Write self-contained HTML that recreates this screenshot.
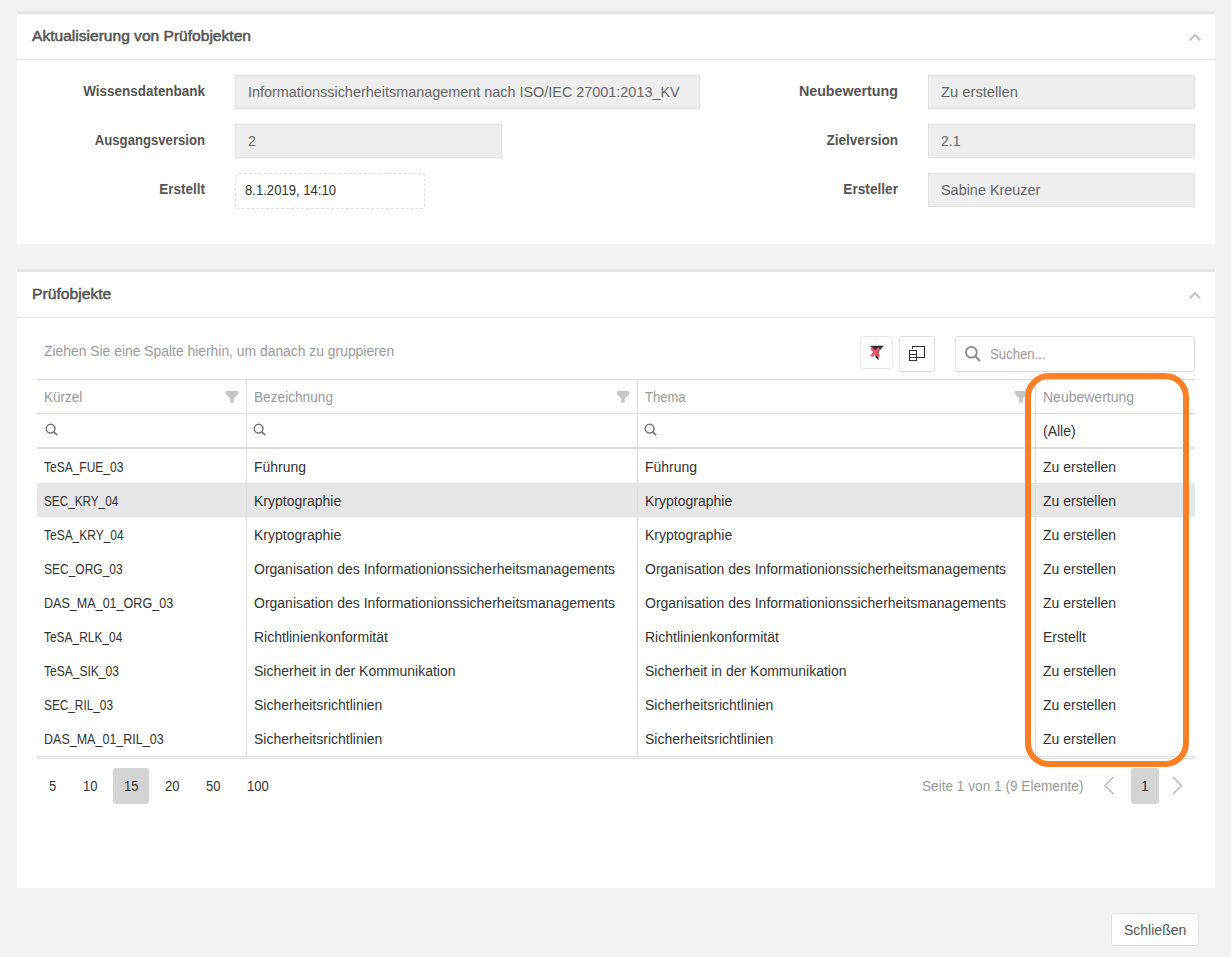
<!DOCTYPE html>
<html><head><meta charset="utf-8">
<style>
*{box-sizing:border-box;margin:0;padding:0}
html,body{width:1231px;height:957px;overflow:hidden;background:#f2f2f2;font-family:"Liberation Sans",sans-serif;font-size:14px;color:#333}
.a{position:absolute;white-space:nowrap}
.t{position:absolute;white-space:nowrap;line-height:20px;font-size:14px}
.panel{position:absolute;background:#fff;border-top:3px solid #e4e7ea}
.hline{position:absolute;height:1px;background:#e4e7ea}
.title{color:#555;-webkit-text-stroke:0.5px #555}
.lbl{color:#555;font-weight:bold;text-align:right}
.fld{position:absolute;background:#eeeeee;border:1px solid #e0e2e5}
.ftx{color:#666}
.gl{position:absolute;background:#dddddd}
.hd{color:#999}
.cell{color:#333}
</style></head><body>

<div class="panel" style="left:17px;top:11px;width:1198px;height:233px"></div>
<div class="hline" style="left:17px;top:59px;width:1198px"></div>
<div class="t title" style="left:32px;top:26px;transform:scaleX(1.112);transform-origin:left center;">Aktualisierung von Prüfobjekten</div>
<svg class="a" style="left:1187px;top:31px" width="16" height="12" viewBox="0 0 16 12"><path d="M2.8 9.2 L8 4 L13.2 9.2" fill="none" stroke="#c2c2c2" stroke-width="2"/></svg>
<div class="t lbl" style="left:0;width:205px;top:81px;transform:scaleX(0.961);transform-origin:right center;">Wissensdatenbank</div>
<div class="fld" style="left:235px;top:75px;width:465px;height:34px"></div>
<div class="t ftx" style="left:248px;top:82px;transform:scaleX(1.029);transform-origin:left center;">Informationssicherheitsmanagement nach ISO/IEC 27001:2013_KV</div>
<div class="t lbl" style="left:0;width:205px;top:130px;transform:scaleX(0.938);transform-origin:right center;">Ausgangsversion</div>
<div class="fld" style="left:235px;top:124px;width:267px;height:34px"></div>
<div class="t ftx" style="left:248px;top:131px">2</div>
<div class="t lbl" style="left:0;width:205px;top:179px;transform:scaleX(0.964);transform-origin:right center;">Erstellt</div>
<div class="a" style="left:235px;top:173px;width:190px;height:36px;border:1px dashed #ddd;border-radius:4px"></div>
<div class="t" style="left:245px;top:180px;color:#333;transform:scaleX(0.936);transform-origin:left center;">8.1.2019, 14:10</div>
<div class="t lbl" style="left:700px;width:198px;top:81px;transform:scaleX(1.019);transform-origin:right center;">Neubewertung</div>
<div class="fld" style="left:928px;top:75px;width:267px;height:34px"></div>
<div class="t ftx" style="left:941px;top:82px;transform:scaleX(1.053);transform-origin:left center;">Zu erstellen</div>
<div class="t lbl" style="left:700px;width:198px;top:130px;transform:scaleX(0.967);transform-origin:right center;">Zielversion</div>
<div class="fld" style="left:928px;top:124px;width:267px;height:34px"></div>
<div class="t ftx" style="left:941px;top:131px">2.1</div>
<div class="t lbl" style="left:700px;width:198px;top:179px;transform:scaleX(0.975);transform-origin:right center;">Ersteller</div>
<div class="fld" style="left:928px;top:173px;width:267px;height:34px"></div>
<div class="t ftx" style="left:941px;top:180px;transform:scaleX(1.03);transform-origin:left center;">Sabine Kreuzer</div>
<div class="panel" style="left:17px;top:269px;width:1198px;height:619px"></div>
<div class="hline" style="left:17px;top:317px;width:1198px"></div>
<div class="t title" style="left:32px;top:284px;transform:scaleX(1.12);transform-origin:left center;">Prüfobjekte</div>
<svg class="a" style="left:1187px;top:289px" width="16" height="12" viewBox="0 0 16 12"><path d="M2.8 9.2 L8 4 L13.2 9.2" fill="none" stroke="#c2c2c2" stroke-width="2"/></svg>
<div class="t hd" style="left:44px;top:341px;transform:scaleX(0.991);transform-origin:left center;">Ziehen Sie eine Spalte hierhin, um danach zu gruppieren</div>
<div class="a" style="left:860px;top:336px;width:33px;height:33px;border:1px solid #e8e8e8;border-radius:3px"></div>
<svg class="a" style="left:862px;top:338px" width="30" height="30" viewBox="0 0 30 30"><path d="M8 7.7H22L16.6 13.6V22.2L13.4 19.2V13.6Z" fill="#333"/><path d="M9.3 10.3L17.2 18.2M17.2 10.3L9.3 18.2" stroke="#ee5468" stroke-width="2.8"/></svg>
<div class="a" style="left:899px;top:336px;width:36px;height:36px;border:1px solid #ddd;border-radius:3px"></div>
<svg class="a" style="left:902px;top:339px" width="30" height="30" viewBox="0 0 30 30" shape-rendering="crispEdges"><path d="M10.5 9.5V7.5H22.5V18.5H15" fill="none" stroke="#333" stroke-width="1"/><path d="M7.5 11.5H14.5V21.5H7.5Z M7.5 15.5H14.5 M7.5 18.5H14.5" fill="none" stroke="#333" stroke-width="1"/></svg>
<div class="a" style="left:955px;top:336px;width:240px;height:36px;border:1px solid #ddd;border-radius:3px"></div>
<svg class="a" style="left:958px;top:339px" width="30" height="30" viewBox="0 0 30 30"><circle cx="13.4" cy="13.3" r="5.4" fill="none" stroke="#888" stroke-width="1.8"/><path d="M17.4 17.4L22 22" stroke="#888" stroke-width="2"/></svg>
<div class="t hd" style="left:990px;top:344px;transform:scaleX(0.94);transform-origin:left center;">Suchen...</div>
<div class="gl" style="left:37px;top:379px;width:1158px;height:1px"></div>
<div class="gl" style="left:37px;top:413px;width:1158px;height:1px"></div>
<div class="gl" style="left:37px;top:447px;width:1158px;height:2px"></div>
<div class="a" style="left:37px;top:483px;width:1158px;height:34px;background:#e6e6e6"></div>
<div class="gl" style="left:37px;top:756px;width:1158px;height:1px"></div>
<div class="gl" style="left:37px;top:758px;width:1158px;height:1px"></div>
<div class="gl" style="left:246px;top:380px;width:1px;height:376px"></div>
<div class="gl" style="left:637px;top:380px;width:1px;height:376px"></div>
<div class="gl" style="left:1035px;top:380px;width:1px;height:376px"></div>
<div class="t hd" style="left:44px;top:387px;transform:scaleX(0.963);transform-origin:left center;">Kürzel</div>
<div class="t hd" style="left:254px;top:387px;transform:scaleX(0.976);transform-origin:left center;">Bezeichnung</div>
<div class="t hd" style="left:645px;top:387px;transform:scaleX(0.93);transform-origin:left center;">Thema</div>
<div class="t hd" style="left:1043px;top:387px">Neubewertung</div>
<svg class="a" style="left:226px;top:391px" width="12" height="12" viewBox="0 0 12 12"><path d="M0 0H12V3.3L7.8 7.4V11.7H4.2V7.4L0 3.3Z" fill="#c6c6c6"/></svg>
<svg class="a" style="left:617px;top:391px" width="12" height="12" viewBox="0 0 12 12"><path d="M0 0H12V3.3L7.8 7.4V11.7H4.2V7.4L0 3.3Z" fill="#c6c6c6"/></svg>
<svg class="a" style="left:1015px;top:391px" width="12" height="12" viewBox="0 0 12 12"><path d="M0 0H12V3.3L7.8 7.4V11.7H4.2V7.4L0 3.3Z" fill="#c6c6c6"/></svg>
<svg class="a" style="left:44px;top:422px" width="16" height="16" viewBox="0 0 16 16"><circle cx="6.6" cy="6.6" r="4.4" fill="none" stroke="#777" stroke-width="1.5"/><path d="M9.8 9.8L13.2 13.2" stroke="#777" stroke-width="1.7"/></svg>
<svg class="a" style="left:252px;top:422px" width="16" height="16" viewBox="0 0 16 16"><circle cx="6.6" cy="6.6" r="4.4" fill="none" stroke="#777" stroke-width="1.5"/><path d="M9.8 9.8L13.2 13.2" stroke="#777" stroke-width="1.7"/></svg>
<svg class="a" style="left:643px;top:422px" width="16" height="16" viewBox="0 0 16 16"><circle cx="6.6" cy="6.6" r="4.4" fill="none" stroke="#777" stroke-width="1.5"/><path d="M9.8 9.8L13.2 13.2" stroke="#777" stroke-width="1.7"/></svg>
<div class="t cell" style="left:1043px;top:421px">(Alle)</div>
<div class="t cell" style="left:44px;top:457px;transform:scaleX(0.857);transform-origin:left center;">TeSA_FUE_03</div>
<div class="t cell" style="left:254px;top:457px">Führung</div>
<div class="t cell" style="left:645px;top:457px">Führung</div>
<div class="t cell" style="left:1043px;top:457px">Zu erstellen</div>
<div class="t cell" style="left:44px;top:491px;transform:scaleX(0.839);transform-origin:left center;">SEC_KRY_04</div>
<div class="t cell" style="left:254px;top:491px">Kryptographie</div>
<div class="t cell" style="left:645px;top:491px">Kryptographie</div>
<div class="t cell" style="left:1043px;top:491px">Zu erstellen</div>
<div class="t cell" style="left:44px;top:525px;transform:scaleX(0.855);transform-origin:left center;">TeSA_KRY_04</div>
<div class="t cell" style="left:254px;top:525px">Kryptographie</div>
<div class="t cell" style="left:645px;top:525px">Kryptographie</div>
<div class="t cell" style="left:1043px;top:525px">Zu erstellen</div>
<div class="t cell" style="left:44px;top:559px;transform:scaleX(0.857);transform-origin:left center;">SEC_ORG_03</div>
<div class="t cell" style="left:254px;top:559px">Organisation des Informationionssicherheitsmanagements</div>
<div class="t cell" style="left:645px;top:559px">Organisation des Informationionssicherheitsmanagements</div>
<div class="t cell" style="left:1043px;top:559px">Zu erstellen</div>
<div class="t cell" style="left:44px;top:593px;transform:scaleX(0.897);transform-origin:left center;">DAS_MA_01_ORG_03</div>
<div class="t cell" style="left:254px;top:593px">Organisation des Informationionssicherheitsmanagements</div>
<div class="t cell" style="left:645px;top:593px">Organisation des Informationionssicherheitsmanagements</div>
<div class="t cell" style="left:1043px;top:593px">Zu erstellen</div>
<div class="t cell" style="left:44px;top:627px;transform:scaleX(0.853);transform-origin:left center;">TeSA_RLK_04</div>
<div class="t cell" style="left:254px;top:627px">Richtlinienkonformität</div>
<div class="t cell" style="left:645px;top:627px">Richtlinienkonformität</div>
<div class="t cell" style="left:1043px;top:627px">Erstellt</div>
<div class="t cell" style="left:44px;top:661px;transform:scaleX(0.859);transform-origin:left center;">TeSA_SIK_03</div>
<div class="t cell" style="left:254px;top:661px">Sicherheit in der Kommunikation</div>
<div class="t cell" style="left:645px;top:661px">Sicherheit in der Kommunikation</div>
<div class="t cell" style="left:1043px;top:661px">Zu erstellen</div>
<div class="t cell" style="left:44px;top:695px;transform:scaleX(0.844);transform-origin:left center;">SEC_RIL_03</div>
<div class="t cell" style="left:254px;top:695px">Sicherheitsrichtlinien</div>
<div class="t cell" style="left:645px;top:695px">Sicherheitsrichtlinien</div>
<div class="t cell" style="left:1043px;top:695px">Zu erstellen</div>
<div class="t cell" style="left:44px;top:729px;transform:scaleX(0.894);transform-origin:left center;">DAS_MA_01_RIL_03</div>
<div class="t cell" style="left:254px;top:729px">Sicherheitsrichtlinien</div>
<div class="t cell" style="left:645px;top:729px">Sicherheitsrichtlinien</div>
<div class="t cell" style="left:1043px;top:729px">Zu erstellen</div>
<div class="a" style="left:113px;top:768px;width:36px;height:36px;background:#d4d4d4;border-radius:3px"></div>
<div class="t cell" style="left:49px;top:776px;transform:scaleX(0.93);transform-origin:left center;">5</div>
<div class="t cell" style="left:83px;top:776px;transform:scaleX(0.93);transform-origin:left center;">10</div>
<div class="t cell" style="left:124px;top:776px;transform:scaleX(0.93);transform-origin:left center;">15</div>
<div class="t cell" style="left:165px;top:776px;transform:scaleX(0.93);transform-origin:left center;">20</div>
<div class="t cell" style="left:206px;top:776px;transform:scaleX(0.93);transform-origin:left center;">50</div>
<div class="t cell" style="left:247px;top:776px;transform:scaleX(0.93);transform-origin:left center;">100</div>
<div class="t hd" style="left:922px;top:776px;transform:scaleX(0.974);transform-origin:left center;">Seite 1 von 1 (9 Elemente)</div>
<svg class="a" style="left:1100px;top:774px" width="18" height="24" viewBox="0 0 18 24"><path d="M13.5 3L5 11.5L13.5 20" fill="none" stroke="#bbb" stroke-width="1.5"/></svg>
<div class="a" style="left:1131px;top:768px;width:28px;height:36px;background:#d4d4d4;border-radius:3px"></div>
<div class="t cell" style="left:1141px;top:776px">1</div>
<svg class="a" style="left:1168px;top:774px" width="18" height="24" viewBox="0 0 18 24"><path d="M5 3L13.5 11.5L5 20" fill="none" stroke="#bbb" stroke-width="1.5"/></svg>
<div class="a" style="left:1025px;top:373px;width:164px;height:394px;border:6px solid #ff7f27;border-radius:24px"></div>
<div class="a" style="left:1111px;top:913px;width:88px;height:33px;background:#fff;border:1px solid #e0e3e6;border-radius:3px"></div>
<div class="t" style="left:1124px;top:920px;color:#555">Schließen</div>
</body></html>
